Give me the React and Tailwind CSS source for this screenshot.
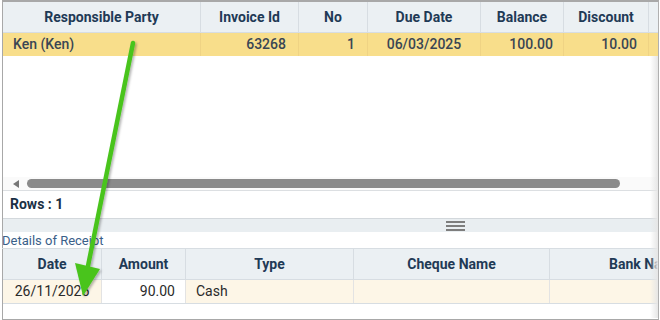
import React from "react";

const topCols = [
  { title: "Responsible Party", w: "w-[198px]", value: "Ken (Ken)", align: "text-left pl-[10px]" },
  { title: "Invoice Id", w: "w-[98px]", value: "63268", align: "text-right pr-[12px]" },
  { title: "No", w: "w-[69px]", value: "1", align: "text-right pr-[12px]" },
  { title: "Due Date", w: "w-[113px]", value: "06/03/2025", align: "text-center" },
  { title: "Balance", w: "w-[83px]", value: "100.00", align: "text-right pr-[10px]" },
  { title: "Discount", w: "w-[85px]", value: "10.00", align: "text-right pr-[11px]" },
];

const bottomCols = [
  { title: "Date", w: "w-[99px]", value: "26/11/2025", align: "text-center", bg: "bg-[#fdf6e7]" },
  { title: "Amount", w: "w-[84px]", value: "90.00", align: "text-right pr-[10px]", bg: "bg-white" },
  { title: "Type", w: "w-[168px]", value: "Cash", align: "text-left pl-[10px]", bg: "bg-[#fdf6e7]" },
  { title: "Cheque Name", w: "w-[196px]", value: "", align: "text-left", bg: "bg-[#fdf6e7]" },
];

function Arrow() {
  return (
    <svg className="absolute left-0 top-0 pointer-events-none" width="660" height="320">
      <defs>
        <filter id="sh" x="-20%" y="-20%" width="140%" height="140%">
          <feDropShadow dx="1.5" dy="1.5" stdDeviation="1.2" floodColor="#000" floodOpacity="0.3" />
        </filter>
      </defs>
      <g filter="url(#sh)">
        <line x1="133" y1="43" x2="88" y2="266" stroke="#4ac41f" strokeWidth="4.5" strokeLinecap="round" />
        <polygon points="75,263 100,269 83,296" fill="#4ac41f" />
      </g>
    </svg>
  );
}

export default function App() {
  return (
    <div className="relative w-[660px] h-[320px] bg-white overflow-hidden font-['Roboto',sans-serif]">
      <div className="ml-[2px] mr-[1px] h-[320px] border-t-2 border-l border-r border-b border-t-[#a8a8a8] border-l-[#a8a8a8] border-r-[#b0b0b0] border-b-[#a8a8a8] flex flex-col">
        {/* top grid */}
        <div className="flex h-[31px] bg-[#ebf0f3] border-b border-[#d7dde2]">
          {topCols.map((c) => (
            <div
              key={c.title}
              className={`${c.w} shrink-0 border-r border-[#d7dde2] flex items-center justify-center text-[14px] font-bold text-[#1f3a56]`}
            >
              {c.title}
            </div>
          ))}
          <div className="flex-1" />
        </div>
        <div className="flex h-[23px] bg-[#f8de8b]">
          {topCols.map((c) => (
            <div
              key={c.title}
              className={`${c.w} shrink-0 border-r border-[#efd384] ${c.align} text-[14px] font-medium text-[#3a4654] leading-[23px]`}
            >
              {c.value}
            </div>
          ))}
          <div className="flex-1" />
        </div>
        <div className="flex-1 min-h-0 flex flex-col">
          <div className="h-[121px]" />
          <div className="h-[14px] bg-[#fafafa] flex items-center border-b border-[#dcdfe2]">
            <div className="ml-[10px] w-0 h-0 border-y-[4px] border-y-transparent border-r-[6px] border-r-[#777]" />
            <div className="ml-[8px] w-[593px] h-[9px] rounded-full bg-[#8a8a8a]" />
          </div>
          <div className="h-[28px] flex items-center pl-[7px] text-[14px] font-bold text-[#1a2f44] border-b border-[#d3d8dc]">
            Rows : 1
          </div>
          <div className="h-[13px] bg-[#e9eef1] flex items-center pl-[443px]">
            <div className="flex flex-col gap-[2px]">
              <div className="w-[19px] h-[2px] bg-[#7d7d7d]" />
              <div className="w-[19px] h-[2px] bg-[#7d7d7d]" />
              <div className="w-[19px] h-[2px] bg-[#7d7d7d]" />
            </div>
          </div>
          <div className="h-[17px] text-[13px] leading-[17px] text-[#3a6089] border-b border-[#d7dde2] -ml-[1px]">
            Details of Receipt
          </div>
          {/* bottom grid */}
          <div className="flex h-[31px] bg-[#ebf0f3] border-b border-[#d7dde2]">
            {bottomCols.map((c) => (
              <div
                key={c.title}
                className={`${c.w} shrink-0 border-r border-[#d7dde2] flex items-center justify-center text-[14px] font-bold text-[#1f3a56]`}
              >
                {c.title}
              </div>
            ))}
            <div className="flex-1 min-w-0 pl-[59px] flex items-center text-[14px] font-bold text-[#1f3a56] whitespace-nowrap overflow-hidden">
              Bank Name
            </div>
          </div>
          <div className="flex h-[24px] border-b border-[#d7dde2]">
            {bottomCols.map((c) => (
              <div
                key={c.title}
                className={`${c.w} shrink-0 ${c.bg} border-r border-[#e3e3e3] ${c.align} text-[14px] text-[#2a2a2a] leading-[23px]`}
              >
                {c.value}
              </div>
            ))}
            <div className="flex-1 bg-[#fdf6e7]" />
          </div>
          <div className="flex-1" />
        </div>
      </div>
      <div className="absolute right-[2px] top-[56px] w-[8px] h-[262px] bg-gradient-to-r from-transparent to-[#e6e6e6]" />
      <Arrow />
    </div>
  );
}
